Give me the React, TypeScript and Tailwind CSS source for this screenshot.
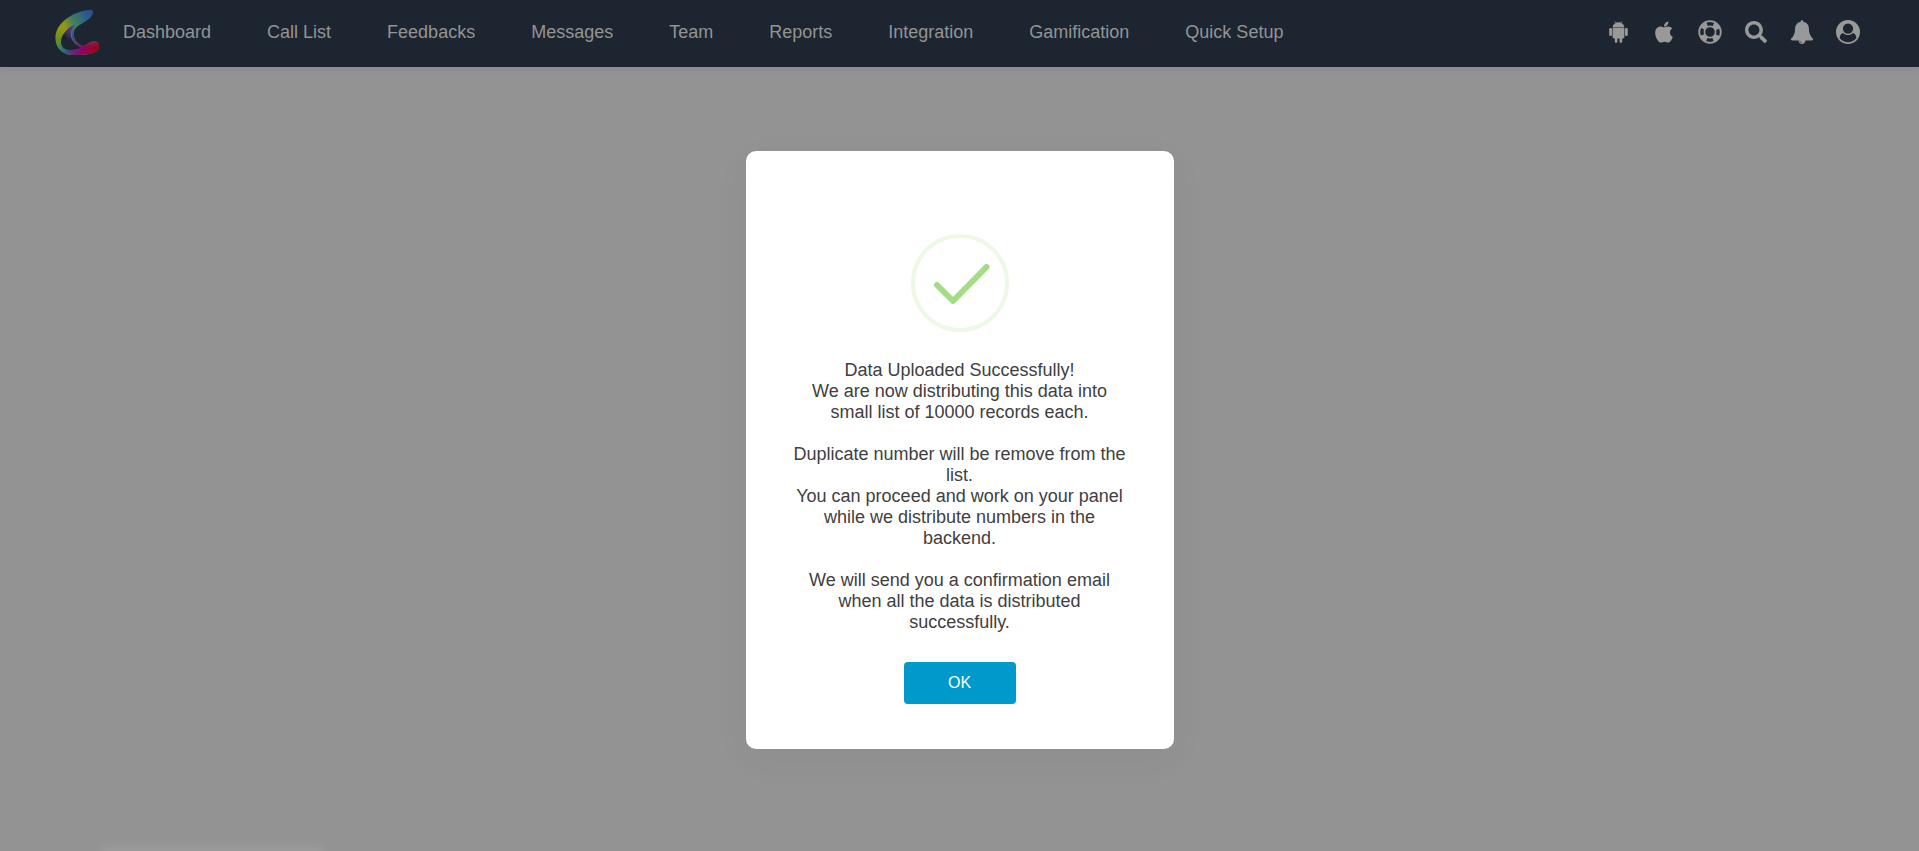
import { useState } from "react";
import { FaApple, FaSearch } from "react-icons/fa";

const navLinks = [
  "Dashboard",
  "Call List",
  "Feedbacks",
  "Messages",
  "Team",
  "Reports",
  "Integration",
  "Gamification",
  "Quick Setup",
];

function Logo() {
  return (
    <svg viewBox="0 0 44 46" className="w-11 h-[46px]" aria-hidden="true">
      <defs>
        <linearGradient id="swoosh" x1="3" y1="30" x2="38" y2="6" gradientUnits="userSpaceOnUse">
          <stop offset="0" stopColor="#7d9416" />
          <stop offset="0.3" stopColor="#989614" />
          <stop offset="0.55" stopColor="#3f7c62" />
          <stop offset="0.85" stopColor="#2b5c8c" />
          <stop offset="1" stopColor="#2b4f8c" />
        </linearGradient>
        <linearGradient id="base" x1="3" y1="34" x2="43" y2="38" gradientUnits="userSpaceOnUse">
          <stop offset="0" stopColor="#4f8a3c" />
          <stop offset="0.15" stopColor="#27707c" />
          <stop offset="0.32" stopColor="#4b3a80" />
          <stop offset="0.6" stopColor="#8a0568" />
          <stop offset="0.95" stopColor="#a0001c" />
        </linearGradient>
        <linearGradient id="fade" x1="0" y1="24" x2="0" y2="38" gradientUnits="userSpaceOnUse">
          <stop offset="0" stopColor="#000" />
          <stop offset="1" stopColor="#fff" />
        </linearGradient>
        <linearGradient id="fold" x1="20" y1="15" x2="8" y2="32" gradientUnits="userSpaceOnUse">
          <stop offset="0" stopColor="#5a3a86" />
          <stop offset="0.5" stopColor="#4a3474" />
          <stop offset="0.8" stopColor="#1c2530" />
        </linearGradient>
        <linearGradient id="rim" x1="18" y1="16" x2="26" y2="38" gradientUnits="userSpaceOnUse">
          <stop offset="0" stopColor="#2f7880" />
          <stop offset="0.45" stopColor="#2b508c" />
          <stop offset="1" stopColor="#5c2a78" />
        </linearGradient>
        <mask id="lower">
          <rect width="44" height="46" fill="url(#fade)" />
        </mask>
      </defs>
      <path d="M33 1C36 0 39 1 38 4C37 8 33 11 28 14C22 17 19 20 18.500 24C18 30 22 36 28 37C33 36 34 32 40 32C45 33 45 39 42 42C37 46 25 46 17 46C6 45 0 38 0.500 27C2 13 18 3 33 1Z" fill="url(#swoosh)" />
      <path d="M33 1C36 0 39 1 38 4C37 8 33 11 28 14C22 17 19 20 18.500 24C18 30 22 36 28 37C33 36 34 32 40 32C45 33 45 39 42 42C37 46 25 46 17 46C6 45 0 38 0.500 27C2 13 18 3 33 1Z" fill="url(#base)" mask="url(#lower)" />
      <path d="M20 15C12 19 6 26 6 33C6 38 10 41 15 41C19 41 23 40 26 38.500C20 36 16 31 16 25C16 21 18 18 20 15Z" fill="url(#fold)" />
      <path d="M20 16.500C16 22 15.500 31 26.500 37.500" fill="none" stroke="url(#rim)" strokeWidth="2" />
    </svg>
  );
}

function AndroidIcon() {
  return (
    <svg viewBox="0 0 19 22" className="w-[19px] h-[22px]" fill="currentColor">
      <path d="M3.6 6.4C3.8 4.4 4.9 2.9 6.6 2L5.5 0.3L5.9 0L7.1 1.8C8.6 1.2 10.4 1.2 11.9 1.8L13.1 0L13.5 0.3L12.4 2C14.1 2.9 15.2 4.4 15.4 6.4Z" />
      <path d="M3.6 7H15.4V16C15.4 16.8 14.9 17.4 14.1 17.4H13.2V20.6A1.3 1.3 0 0 1 10.6 20.6V17.4H8.4V20.6A1.3 1.3 0 0 1 5.8 20.6V17.4H4.9C4.1 17.4 3.6 16.8 3.6 16Z" />
      <rect x="0.2" y="6.9" width="2.8" height="8.2" rx="1.3" />
      <rect x="16" y="6.9" width="2.8" height="8.2" rx="1.3" />
    </svg>
  );
}

function LifeRingIcon() {
  return (
    <svg viewBox="0 0 24 24" className="w-6 h-6" fill="none" stroke="currentColor">
      <circle cx="12" cy="12" r="10.800" strokeWidth="1.800" />
      <circle cx="12" cy="12" r="5.600" strokeWidth="1.600" />
      <circle cx="12" cy="12" r="8" strokeWidth="5" strokeDasharray="6.4 6.166" strokeDashoffset="-3.083" />
    </svg>
  );
}

function BellIcon() {
  return (
    <svg viewBox="0 0 1792 1792" className="w-6 h-6" fill="currentColor">
      <path d="M912 1696q0-16-16-16-59 0-101.500-42.500t-42.500-101.500q0-16-16-16t-16 16q0 73 51.500 124.500t124.500 51.500q16 0 16-16zm816-288q0 52-38 90t-90 38h-448q0 106-75 181t-181 75-181-75-75-181h-448q-52 0-90-38t-38-90q50-42 91-88t85-119.500 74.500-158.500 50-206 19.500-260q0-152 117-282.500t307-158.500q-8-19-8-39 0-40 28-68t68-28 68 28 28 68q0 20-8 39 190 28 307 158.500t117 282.500q0 139 19.500 260t50 206 74.500 158.500 85 119.500 91 88z" />
    </svg>
  );
}

function UserCircleIcon() {
  return (
    <svg viewBox="0 0 1792 1792" className="w-6 h-6" fill="currentColor">
      <path d="M1523 1339q-22-155-87.500-257.500t-184.500-118.500q-67 74-159.500 115.500t-195.500 41.500-195.500-41.500-159.500-115.500q-119 16-184.500 118.500t-87.500 257.500q106 150 271 237.500t356 87.500 356-87.500 271-237.500zm-243-699q0-159-112.500-271.500t-271.500-112.500-271.500 112.500-112.500 271.500 112.500 271.500 271.500 112.500 271.500-112.500 112.500-271.500zm512 256q0 182-71 347.500t-190.500 286-285.500 191.500-349 71q-182 0-348-71t-286-191-191-286-71-348 71-348 191-286 286-191 348-71 348 71 286 191 191 286 71 348z" />
    </svg>
  );
}

const tools = [
  { label: "Android app", icon: <AndroidIcon /> },
  { label: "iOS app", icon: <FaApple className="w-6 h-6" /> },
  { label: "Help", icon: <LifeRingIcon /> },
  { label: "Search", icon: <FaSearch className="w-[22px] h-[22px]" /> },
  { label: "Notifications", icon: <BellIcon /> },
  { label: "Account", icon: <UserCircleIcon /> },
];

function SuccessMark() {
  return (
    <svg viewBox="0 0 98 98" className="w-[98px] h-[98px]" fill="none" aria-hidden="true">
      <circle cx="49" cy="49" r="47" stroke="#edf8e7" strokeWidth="4" />
      <path d="M26 51L42 67L75.500 33" stroke="#a5dc86" strokeWidth="6" strokeLinecap="round" strokeLinejoin="round" />
    </svg>
  );
}

export default function App() {
  const [open, setOpen] = useState(true);

  return (
    <div className="min-h-screen flex flex-col bg-[#939393] font-['Liberation_Sans',Arial,sans-serif] overflow-hidden">
      <header className="h-[67px] shrink-0 flex items-center bg-[#1c2530] pb-1 pl-[55px] pr-12 text-[#999999] shadow-[0_2px_10px_rgba(0,0,0,0.06)]">
        <a href="#" aria-label="Home" className="mr-6">
          <Logo />
        </a>
        <nav className="flex items-center gap-14 text-lg text-[#939495]">
          {navLinks.map((link) => (
            <a key={link} href="#" className="whitespace-nowrap">
              {link}
            </a>
          ))}
        </nav>
        <div className="ml-auto flex items-center">
          {tools.map((tool) => (
            <button key={tool.label} type="button" aria-label={tool.label} className="w-[46px] flex justify-center">
              {tool.icon}
            </button>
          ))}
        </div>
      </header>

      <main className="grow flex flex-col items-center">
        {open && (
          <div
            role="dialog"
            aria-modal="true"
            aria-describedby="upload-message"
            className="mt-21 w-full max-w-[428px] flex flex-col items-center rounded-[10px] bg-white px-11 pt-[83px] pb-[45px] shadow-[0_10px_40px_rgba(0,0,0,0.04)]"
          >
            <SuccessMark />
            <div id="upload-message" className="mt-7 flex flex-col gap-[21px] text-center text-lg leading-[21px] text-[#404040]">
              <p>
                Data Uploaded Successfully!
                <br />
                We are now distributing this data into small list of 10000 records each.
              </p>
              <p>
                Duplicate number will be remove from the list.
                <br />
                You can proceed and work on your panel while we distribute numbers in the backend.
              </p>
              <p>We will send you a confirmation email when all the data is distributed successfully.</p>
            </div>
            <button
              type="button"
              onClick={() => setOpen(false)}
              className="mt-[29px] h-[42px] w-28 rounded bg-[#0099cc] text-base text-white"
            >
              OK
            </button>
          </div>
        )}
      </main>

      {/* soft light edge along the bottom left */}
      <div className="ml-[105px] w-[215px] h-0 shadow-[0_0_10px_3px_rgba(255,255,255,0.15)]"></div>
    </div>
  );
}
